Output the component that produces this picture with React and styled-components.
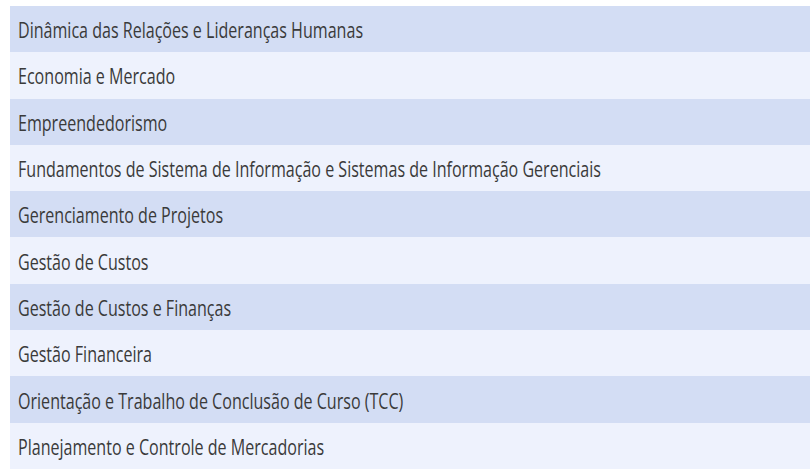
import React from "react";
import styled, { createGlobalStyle } from "styled-components";

const courses = [
  "Dinâmica das Relações e Lideranças Humanas",
  "Economia e Mercado",
  "Empreendedorismo",
  "Fundamentos de Sistema de Informação e Sistemas de Informação Gerenciais",
  "Gerenciamento de Projetos",
  "Gestão de Custos",
  "Gestão de Custos e Finanças",
  "Gestão Financeira",
  "Orientação e Trabalho de Conclusão de Curso (TCC)",
  "Planejamento e Controle de Mercadorias",
];

const GlobalStyle = createGlobalStyle`
  html, body {
    margin: 0;
    background: #fff;
    overflow: hidden;
  }
`;

const Page = styled.div`
  padding: 6px 0 0 10px;
`;

const List = styled.ul`
  list-style: none;
  margin: 0;
  padding: 0;
  width: 800px;
`;

const Row = styled.li`
  display: flex;
  align-items: center;
  height: 46.3px;
  padding-left: 7.5px;
  background-color: ${({ $odd }) => ($odd ? "#d3ddf4" : "#eef2fd")};
  font-family: "Open Sans", sans-serif;
  font-size: 22px;
  color: #3a3a3a;
  white-space: nowrap;
`;

const Label = styled.span`
  display: inline-block;
  transform: translateY(-0.5px) scaleX(0.73);
  transform-origin: left center;
`;

export default function App() {
  return (
    <Page>
      <GlobalStyle />
      <List>
        {courses.map((course, i) => (
          <Row key={course} $odd={i % 2 === 0}>
            <Label>{course}</Label>
          </Row>
        ))}
      </List>
    </Page>
  );
}
